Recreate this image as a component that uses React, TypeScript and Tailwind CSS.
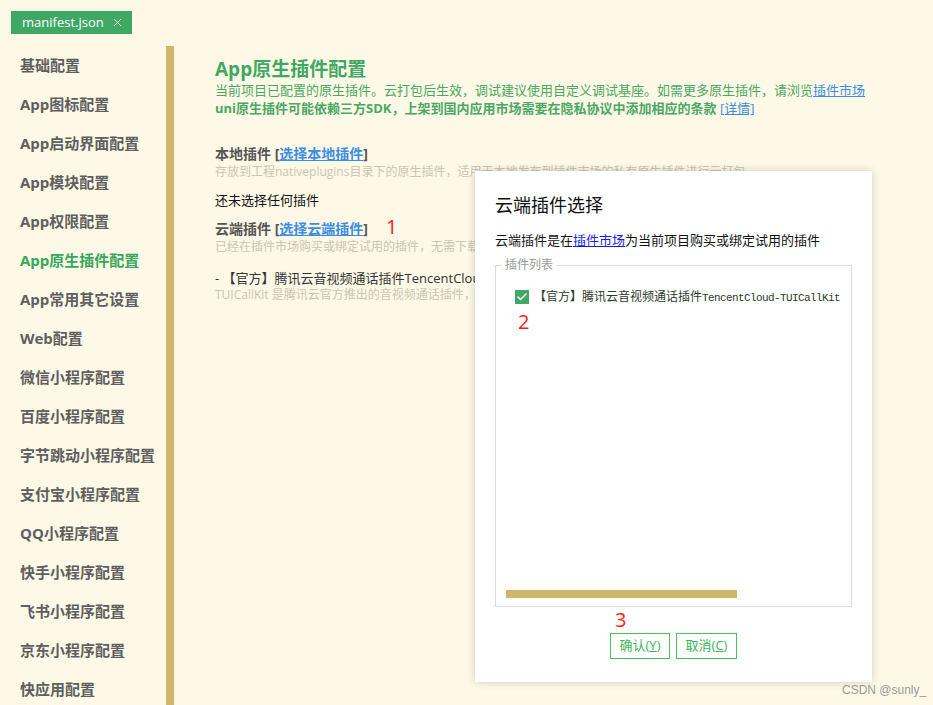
import { Check, X } from 'lucide-react';

const cjk = '"Open Sans", "Noto Sans CJK SC", sans-serif';

const navItems = [
  '基础配置',
  'App图标配置',
  'App启动界面配置',
  'App模块配置',
  'App权限配置',
  'App原生插件配置',
  'App常用其它设置',
  'Web配置',
  '微信小程序配置',
  '百度小程序配置',
  '字节跳动小程序配置',
  '支付宝小程序配置',
  'QQ小程序配置',
  '快手小程序配置',
  '飞书小程序配置',
  '京东小程序配置',
  '快应用配置',
];

function Sidebar() {
  return (
    <div className="flex shrink-0">
      <div className="w-[166px] pt-[46px]">
        {navItems.map((item) => (
          <div
            key={item}
            className={`flex h-[39px] items-center pl-5 text-[15px] font-bold ${
              item === 'App原生插件配置' ? 'text-[#35a85c]' : 'text-[#5f5f5f]'
            }`}
          >
            {item}
          </div>
        ))}
      </div>
      {/* 세로 스크롤바 */}
      <div className="mt-[46px] w-2 bg-[#cfb66a]" />
    </div>
  );
}

function CloudDialog() {
  return (
    <div className="absolute left-[475px] top-[171px] flex h-[511px] w-[397px] flex-col bg-white px-5 shadow-[0_0_8px_rgba(0,0,0,0.18)]">
      <div className="mt-[22px] text-[18px] leading-6 text-[#111]">云端插件选择</div>
      <div className="mt-[14px] text-[13px] leading-[18px] text-[#111]">
        云端插件是在<span className="text-[#1a1aff] underline">插件市场</span>为当前项目购买或绑定试用的插件
      </div>
      <div className="relative mt-4 flex h-[342px] flex-col border border-[#dcdcdc]">
        <span className="absolute -top-[9px] left-[6px] bg-white px-[3px] text-[12px] leading-4 text-[#999]">
          插件列表
        </span>
        <div className="ml-[19px] mt-[22px] flex items-center gap-[5px]">
          <div className="flex h-[14px] w-[14px] items-center justify-center bg-[#3fa865]">
            <Check className="h-3 w-3 text-white" strokeWidth={3} />
          </div>
          <span className="text-[12px] text-[#2b3b2b]">
            【官方】腾讯云音视频通话插件
            <span className="font-['Liberation_Mono',monospace] text-[11px] tracking-[-0.6px]">
              TencentCloud-TUICallKit
            </span>
          </span>
        </div>
        <div className="ml-[22px] mt-[3px] text-[20px] leading-6 text-[#ff1a1a]">2</div>
        <div className="mt-auto mb-2 ml-[10px] h-2 w-[231px] bg-[#cfb66a]" />
      </div>
      <div className="ml-[120px] mt-[1px] text-[20px] leading-6 text-[#ff1a1a]">3</div>
      <div className="mt-[1px] flex gap-[6px] pl-[115px]">
        <button className="flex h-[26px] w-[60px] items-center justify-center border border-[#45c45c] text-[13px] text-[#3cb55a]">
          确认(<span className="underline">Y</span>)
        </button>
        <button className="flex h-[26px] w-[61px] items-center justify-center border border-[#45c45c] text-[13px] text-[#3cb55a]">
          取消(<span className="underline">C</span>)
        </button>
      </div>
    </div>
  );
}

export default function App() {
  return (
    <div
      className="relative h-[705px] w-[933px] overflow-hidden bg-[#fef8e6]"
      style={{ fontFamily: cjk }}
    >
      <div className="absolute left-[11px] top-[11px] flex h-[23px] items-center gap-[7px] bg-[#3fa865] pl-[11px] pr-[8px] text-[13px] text-white">
        manifest.json <X className="h-[13px] w-[13px]" strokeWidth={1.5} />
      </div>

      <div className="flex h-full">
        <Sidebar />

        <main className="flex min-w-0 flex-1 flex-col whitespace-nowrap pl-[41px] pt-[57px]">
          <h1 className="text-[19px] font-bold leading-6 text-[#3fa865]">App原生插件配置</h1>
          <p className="text-[13px] leading-[18px] text-[#4aa865]">
            当前项目已配置的原生插件。云打包后生效，调试建议使用自定义调试基座。如需更多原生插件，请浏览
            <span className="text-[#3a8ee6] underline">插件市场</span>
          </p>
          <p className="text-[13px] font-bold leading-[18px] text-[#4aa865]">
            uni原生插件可能依赖三方SDK，上架到国内应用市场需要在隐私协议中添加相应的条款{' '}
            <span className="font-normal text-[#3a8ee6] underline">[详情]</span>
          </p>

          <div className="mt-[27px] text-[14px] font-bold leading-5 text-[#555]">
            本地插件 [<span className="text-[#3a8ee6] underline">选择本地插件</span>]
          </div>
          <div className="text-[12px] leading-[16px] text-[#cbc6b2]">
            存放到工程nativeplugins目录下的原生插件，适用于本地发布到插件市场的私有原生插件进行云打包。
          </div>

          <div className="mt-[10px] text-[13px] leading-5 text-[#111]">还未选择任何插件</div>

          <div className="mt-[5px] flex items-end gap-[18px] text-[14px] font-bold leading-5 text-[#555]">
            <span>
              云端插件 [<span className="text-[#3a8ee6] underline">选择云端插件</span>]
            </span>
            <span className="text-[20px] font-normal leading-6 text-[#ff1a1a]">1</span>
          </div>
          <div className="text-[12px] leading-[16px] text-[#cbc6b2]">
            已经在插件市场购买或绑定试用的插件，无需下载到本地，云打包时会自动合并到安装包中。
          </div>

          <div className="mt-[14px] text-[13px] leading-[18px] text-[#333]">
            - 【官方】腾讯云音视频通话插件TencentCloud-TUICallKit
          </div>
          <div className="text-[12px] leading-[16px] text-[#cbc6b2]">
            TUICallKit 是腾讯云官方推出的音视频通话插件，集成简单，只需调用少量 API 就可实现音视频通话功能。
          </div>
        </main>
      </div>

      <CloudDialog />

      <div className="absolute left-[842px] top-[681px] font-['Liberation_Sans',sans-serif] text-[12px] text-[#9a9a9a]">
        CSDN @sunly_
      </div>
    </div>
  );
}
